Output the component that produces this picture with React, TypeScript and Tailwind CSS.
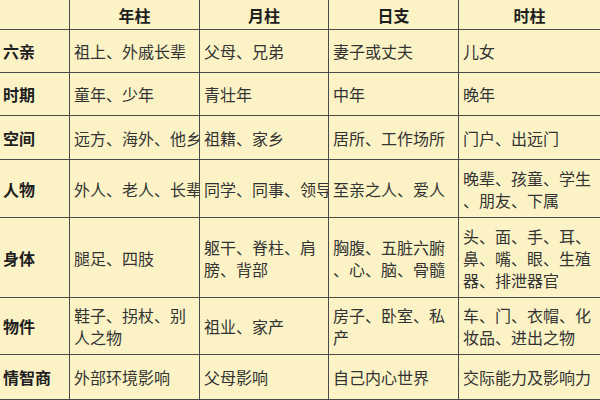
import React from "react";

type Row = {
  label: string;
  height: string;
  cells: string[][];
};

const heads = ["年柱", "月柱", "日支", "时柱"];

// each cell is a list of lines, broken the way the sheet wraps them
const rows: Row[] = [
  { label: "六亲", height: "h-[43px]", cells: [["祖上、外戚长辈"], ["父母、兄弟"], ["妻子或丈夫"], ["儿女"]] },
  { label: "时期", height: "h-[43px]", cells: [["童年、少年"], ["青壮年"], ["中年"], ["晚年"]] },
  { label: "空间", height: "h-[44px]", cells: [["远方、海外、他乡"], ["祖籍、家乡"], ["居所、工作场所"], ["门户、出远门"]] },
  {
    label: "人物",
    height: "h-[58px]",
    cells: [["外人、老人、长辈"], ["同学、同事、领导"], ["至亲之人、爱人"], ["晚辈、孩童、学生", "、朋友、下属"]],
  },
  {
    label: "身体",
    height: "h-[80px]",
    cells: [
      ["腿足、四肢"],
      ["躯干、脊柱、肩", "膀、背部"],
      ["胸腹、五脏六腑", "、心、脑、骨髓"],
      ["头、面、手、耳、", "鼻、嘴、眼、生殖", "器、排泄器官"],
    ],
  },
  {
    label: "物件",
    height: "h-[57px]",
    cells: [["鞋子、拐杖、别", "人之物"], ["祖业、家产"], ["房子、卧室、私", "产"], ["车、门、衣帽、化", "妆品、进出之物"]],
  },
  { label: "情智商", height: "h-[45px]", cells: [["外部环境影响"], ["父母影响"], ["自己内心世界"], ["交际能力及影响力"]] },
];

const line = "border-[#4a4a4a]";

export default function App() {
  return (
    <div
      className="w-[600px] h-[400px] overflow-hidden bg-[#fbf3c6] text-[16px] text-[#333333]"
      style={{ fontFamily: '"Noto Sans CJK SC", "Noto Sans", sans-serif' }}
    >
      <div className="grid grid-cols-[70px_130px_129px_130px_141px]">
        {/* header */}
        <div className={`h-[30px] border-r border-b ${line}`} />
        {heads.map((h, i) => (
          <div
            key={h}
            className={`h-[30px] flex items-center justify-center border-b ${line} ${i < 3 ? "border-r" : ""} font-bold text-[#1e1e1e]`}
          >
            {h}
          </div>
        ))}

        {rows.map((row) => (
          <React.Fragment key={row.label}>
            <div
              className={`${row.height} flex items-center pl-[3px] border-r border-b ${line} font-bold text-[#1e1e1e] whitespace-nowrap overflow-hidden`}
            >
              {row.label}
            </div>
            {row.cells.map((lines, i) => (
              <div
                key={i}
                className={`${row.height} flex flex-col justify-center pl-[4px] border-b ${line} ${i < 3 ? "border-r" : ""} whitespace-nowrap overflow-hidden leading-[22px]`}
              >
                {lines.map((t, j) => (
                  <span key={j}>{t}</span>
                ))}
              </div>
            ))}
          </React.Fragment>
        ))}
      </div>
    </div>
  );
}
